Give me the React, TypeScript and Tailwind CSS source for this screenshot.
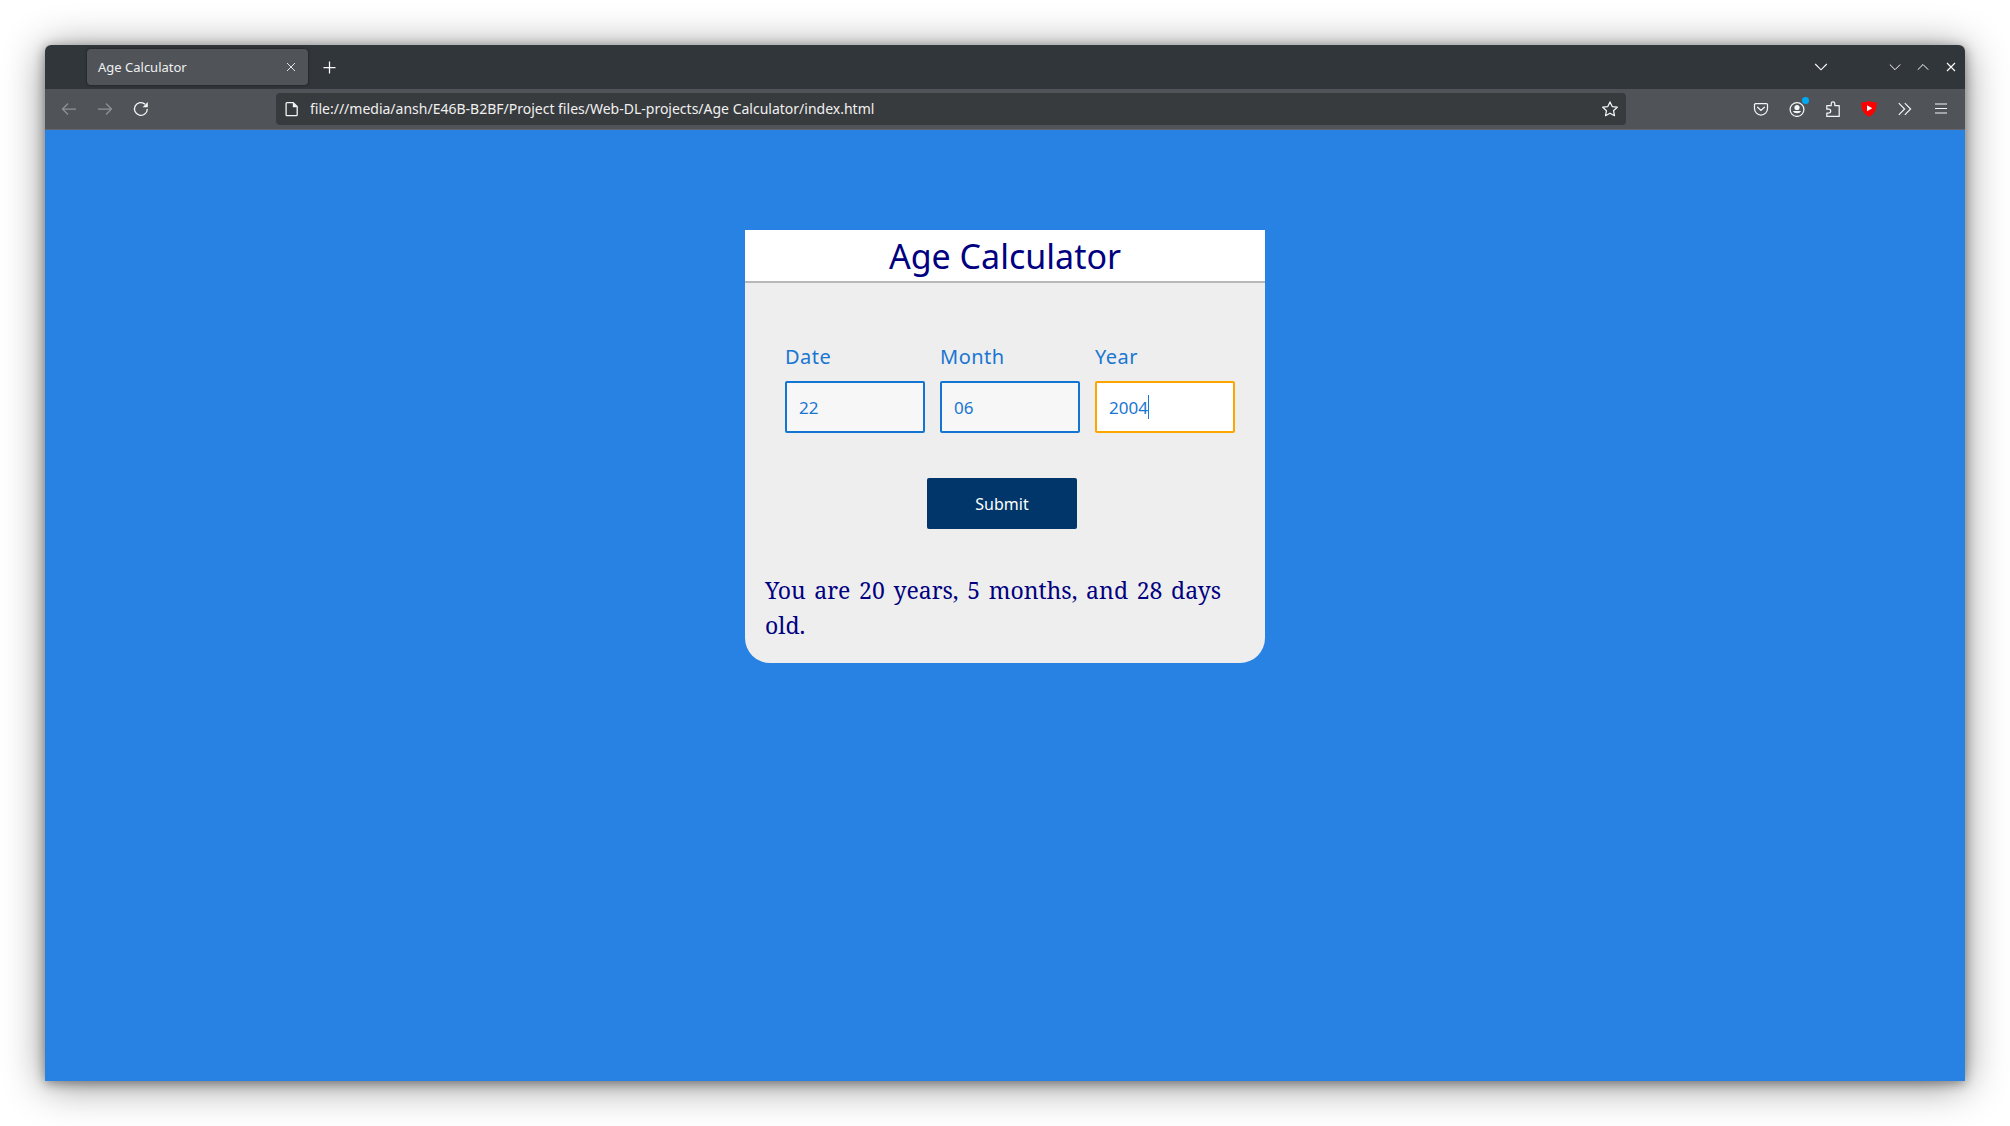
import { useState, type ReactNode } from "react";

function Icon({ children, className = "size-4" }: { children: ReactNode; className?: string }) {
  return (
    <svg viewBox="0 0 16 16" fill="none" stroke="currentColor" strokeWidth="1.25" className={className} aria-hidden="true">
      {children}
    </svg>
  );
}

function IconButton({ label, className = "w-9", children }: { label: string; className?: string; children: ReactNode }) {
  return (
    <button type="button" aria-label={label} className={`flex h-8 shrink-0 items-center justify-center ${className}`}>
      {children}
    </button>
  );
}

function TabBar() {
  return (
    <div className="flex h-11 items-center bg-[#31363b] pl-[42px] text-[#fcfcfc]">
      <div className="flex h-9 w-[221px] items-center justify-between rounded bg-[#505459] pr-2 pl-[11px] shadow-[0_0_3px_rgba(0,0,0,0.5)]">
        <span className="pt-0.5 text-[13px] text-[#eff0f1]">Age Calculator</span>
        <button type="button" aria-label="Close tab" className="flex size-[18px] items-center justify-center text-[#e3e4e5]">
          <Icon>
            <path d="M4 4 12 12M12 4 4 12" strokeWidth="1" />
          </Icon>
        </button>
      </div>
      <IconButton label="New tab" className="ml-[3px] w-9">
        <Icon>
          <path d="M8.5 2.5v12M2.5 8.5h12" />
        </Icon>
      </IconButton>
      <div className="flex-1" />
      <IconButton label="List all tabs" className="mr-[42px] w-9">
        <Icon>
          <path d="m2.2 5 5.800 5.800 5.800-5.800" strokeWidth="1.1" />
        </Icon>
      </IconButton>
      <IconButton label="Minimize" className="w-7">
        <Icon>
          <path d="m2.800 5.500 5.200 5.200 5.200-5.200" strokeWidth="1" />
        </Icon>
      </IconButton>
      <IconButton label="Maximize" className="w-7">
        <Icon>
          <path d="m2.800 10.700 5.200-5.200 5.200 5.200" strokeWidth="1" />
        </Icon>
      </IconButton>
      <IconButton label="Close window" className="w-7">
        <Icon>
          <path d="m4 4 8 8M12 4l-8 8" strokeWidth="1.1" />
        </Icon>
      </IconButton>
    </div>
  );
}

function Toolbar() {
  return (
    <div className="flex h-[41px] items-center border-b border-[#64686c] bg-[#505459] px-1.5 text-[#f4f5f5]">
      <IconButton label="Back" className="w-9 text-[#8f9295]">
        <Icon>
          <path d="M15 8H2M7 2.500 1.500 8 7 13.500" />
        </Icon>
      </IconButton>
      <IconButton label="Forward" className="w-9 text-[#8f9295]">
        <Icon>
          <path d="M1 8h13M9 2.500 14.500 8 9 13.500" />
        </Icon>
      </IconButton>
      <IconButton label="Reload">
        <Icon>
          <path d="M14.300 8A6.400 6.400 0 1 1 12.200 3.200" strokeWidth="1.3" />
          <path d="M14.800 1v5.200H9.600Z" fill="currentColor" stroke="none" />
        </Icon>
      </IconButton>
      <div className="mx-[117px] flex h-8 flex-1 items-center rounded bg-[#383b3e] px-2">
        <Icon>
          <path d="M3 1.600h6.200l4 4v8.200a.9.9 0 0 1-.9.9H3a.9.9 0 0 1-.9-.9V2.500a.9.9 0 0 1 .9-.9Z" strokeWidth="1.3" />
          <path d="M8.800 1.400v4.800h4.800Z" fill="currentColor" stroke="none" />
        </Icon>
        <input
          type="text"
          aria-label="Address"
          defaultValue="file:///media/ansh/E46B-B2BF/Project files/Web-DL-projects/Age Calculator/index.html"
          className="ml-2.5 min-w-0 flex-1 bg-transparent text-sm text-[#f0f0f0] outline-none"
        />
        <button type="button" aria-label="Bookmark this page">
          <Icon>
            <path d="m8 .900 2.200 4.700 5.100.600-3.800 3.500 1 5L8 12.200l-4.500 2.500 1-5L.700 6.200l5.100-.600Z" strokeLinejoin="round" />
          </Icon>
        </button>
      </div>
      <IconButton label="Save to Pocket">
        <Icon>
          <path d="M2.600 2.600h10.800a1.100 1.100 0 0 1 1.100 1.100V7.500a6.500 6.500 0 0 1-13 0V3.700a1.100 1.100 0 0 1 1.100-1.100Z" />
          <path d="M4.600 6.200 8 9.500l3.400-3.300" strokeLinecap="round" />
        </Icon>
      </IconButton>
      <IconButton label="Account">
        <span className="relative">
          <Icon>
            <circle cx="8" cy="8.500" r="6.900" />
            <circle cx="8" cy="6.500" r="2.600" fill="currentColor" stroke="none" />
            <path d="M3.800 10h8.400a4.500 3.600 0 0 1-8.400 0Z" fill="currentColor" stroke="none" />
          </Icon>
          <span className="absolute -top-1 -right-1 size-[7px] rounded-full bg-[#00aaf2]" />
        </span>
      </IconButton>
      <IconButton label="Extensions">
        <Icon>
          <path d="M1.800 4.600h4.400V2.700a1.800 1.800 0 0 1 3.600 0v1.900h4.400v10.800H1.800v-3.400h2a1.900 1.900 0 0 0 0-3.800h-2Z" strokeLinejoin="round" />
        </Icon>
      </IconButton>
      <IconButton label="Video blocker">
        <Icon>
          <path d="M8 0c2.300 1 5 1.400 7.700 1.500.2 6-1.700 11.400-7.700 14.300C2 12.900.1 7.500.3 1.500 3 1.400 5.700 1 8 0Z" fill="#ff0000" stroke="none" />
          <path d="M6 4.300v6l5.300-3Z" fill="#fff" stroke="none" />
        </Icon>
      </IconButton>
      <IconButton label="More tools">
        <Icon>
          <path d="M1.800 2.200 7.600 8l-5.800 5.800M7.800 2.200 13.600 8l-5.800 5.800" strokeWidth="1.2" />
        </Icon>
      </IconButton>
      <IconButton label="Open menu">
        <Icon>
          <path d="M2 3h12M2 7.500h12M2 12h12" strokeWidth="1.100" />
        </Icon>
      </IconButton>
    </div>
  );
}

function Field({
  id,
  label,
  value,
  onChange,
  active = false,
}: {
  id: string;
  label: string;
  value: string;
  onChange: (value: string) => void;
  active?: boolean;
}) {
  return (
    <div className="min-w-0 flex-1">
      <label htmlFor={id} className="block text-xl leading-7 tracking-wide text-[#1976d2]">
        {label}
      </label>
      <div className="relative mt-2.5">
        <input
          id={id}
          type="text"
          inputMode="numeric"
          value={value}
          onChange={(event) => onChange(event.target.value)}
          className={`h-[52px] w-full rounded-xs border-2 px-3 text-[17px] text-[#1976d2] outline-none ${
            active ? "border-[#ffa500] bg-white" : "border-[#1275d1] bg-[#f7f7f7]"
          }`}
        />
        {active && (
          <span className="pointer-events-none absolute inset-y-0 left-3.5 flex items-center text-[17px]">
            <span className="invisible">{value}</span>
            <span className="h-6 w-px bg-[#1976d2]" />
          </span>
        )}
      </div>
    </div>
  );
}

export default function App() {
  const [day, setDay] = useState("22");
  const [month, setMonth] = useState("06");
  const [year, setYear] = useState("2004");

  return (
    <div className="flex min-h-screen flex-col bg-white p-[45px] font-['Noto_Sans',sans-serif]">
      <div className="flex flex-1 flex-col rounded-t-md shadow-[0_2px_12px_rgba(0,0,0,0.4),0_4px_40px_rgba(0,0,0,0.45)]">
        <header className="overflow-hidden rounded-t-md">
          <TabBar />
          <Toolbar />
        </header>
        <main className="flex-1 bg-[#2882e4] pt-[100px]">
          <section className="mx-auto max-w-[520px] overflow-hidden rounded-b-[25px] bg-[#eeeeee]">
            <h1 className="border-b-2 border-[#b8b8b8] bg-white pt-0.5 text-center text-[34px] leading-[49px] text-[#000080]">
              Age Calculator
            </h1>
            <form onSubmit={(event) => event.preventDefault()} className="px-10 pt-[60px]">
              <div className="-mr-2.5 flex gap-[15px]">
                <Field id="date" label="Date" value={day} onChange={setDay} />
                <Field id="month" label="Month" value={month} onChange={setMonth} />
                <Field id="year" label="Year" value={year} onChange={setYear} active />
              </div>
              <div className="mt-[45px] flex justify-center pr-1.5">
                <button type="submit" className="h-[51px] w-[150px] rounded-xs bg-[#003669] text-base text-white">
                  Submit
                </button>
              </div>
            </form>
            <p className="mt-11 mr-11 mb-5 ml-5 text-justify font-['Noto_Serif','Liberation_Serif',serif] text-[23px] leading-[35px] text-[#000080]">
              You are 20 years, 5 months, and 28 days old.
            </p>
          </section>
        </main>
      </div>
    </div>
  );
}
